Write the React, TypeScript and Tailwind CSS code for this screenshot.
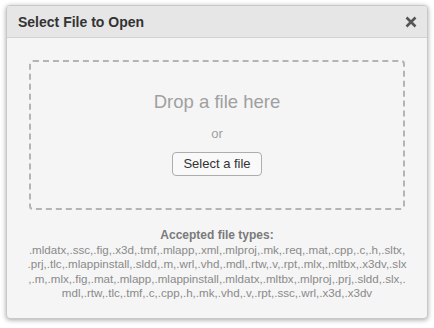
import React from "react";

export default function App() {
  const lines = [
    ".mldatx,.ssc,.fig,.x3d,.tmf,.mlapp,.xml,.mlproj,.mk,.req,.mat,.cpp,.c,.h,.sltx,",
    ".prj,.tlc,.mlappinstall,.sldd,.m,.wrl,.vhd,.mdl,.rtw,.v,.rpt,.mlx,.mltbx,.x3dv,.slx",
    ",.m,.mlx,.fig,.mat,.mlapp,.mlappinstall,.mldatx,.mltbx,.mlproj,.prj,.sldd,.slx,.",
    "mdl,.rtw,.tlc,.tmf,.c,.cpp,.h,.mk,.vhd,.v,.rpt,.ssc,.wrl,.x3d,.x3dv",
  ];
  return (
    <div
      className="w-[434px] h-[328px] bg-white pt-[5px] pl-[6px]"
      style={{ fontFamily: '"Liberation Sans", Arial, sans-serif' }}
    >
      <div className="w-[422px] h-[314px] bg-[#f5f5f5] border border-[#c8c8c8] rounded-[4px] shadow-[0_1px_5px_rgba(0,0,0,0.35)] flex flex-col overflow-hidden">
        <div className="h-[32px] shrink-0 bg-[#e6e6e6] border-b border-[#d2d2d2] flex items-center justify-between pl-[11px] pr-[10px]">
          <span className="text-[14px] font-bold text-[#333] mt-[1px]">Select File to Open</span>
          <svg width="12" height="12" viewBox="0 0 12 12" className="mt-[1px]">
            <path d="M1.5 1.5 L10.5 10.5 M10.5 1.5 L1.5 10.5" stroke="#555" strokeWidth="2.6" strokeLinecap="butt" />
          </svg>
        </div>
        <div className="flex flex-col items-center pt-[22px]">
          <div className="w-[376px] h-[150px] border-2 border-dashed border-[#b4b4b4] rounded-[4px] flex flex-col items-center pt-[29px]">
            <div className="text-[18.5px] leading-[22px] text-[#a0a0a0]">Drop a file here</div>
            <div className="text-[13px] leading-[16px] text-[#a0a0a0] mt-[13px]">or</div>
            <button className="mt-[10px] w-[90px] h-[24px] border border-[#adadad] rounded-[4px] bg-[#f9f9f9] text-[13px] text-[#333] flex items-center justify-center">
              Select a file
            </button>
          </div>
          <div className="w-[400px] mt-[18px] text-center text-[11.6px] leading-[14.5px] text-[#8a8a8a] whitespace-nowrap flex flex-col items-center">
            <div className="font-bold text-[12px] text-[#7a7a7a]">Accepted file types:</div>
            {lines.map((l, i) => (
              <div key={i}>{l}</div>
            ))}
          </div>
        </div>
      </div>
    </div>
  );
}
